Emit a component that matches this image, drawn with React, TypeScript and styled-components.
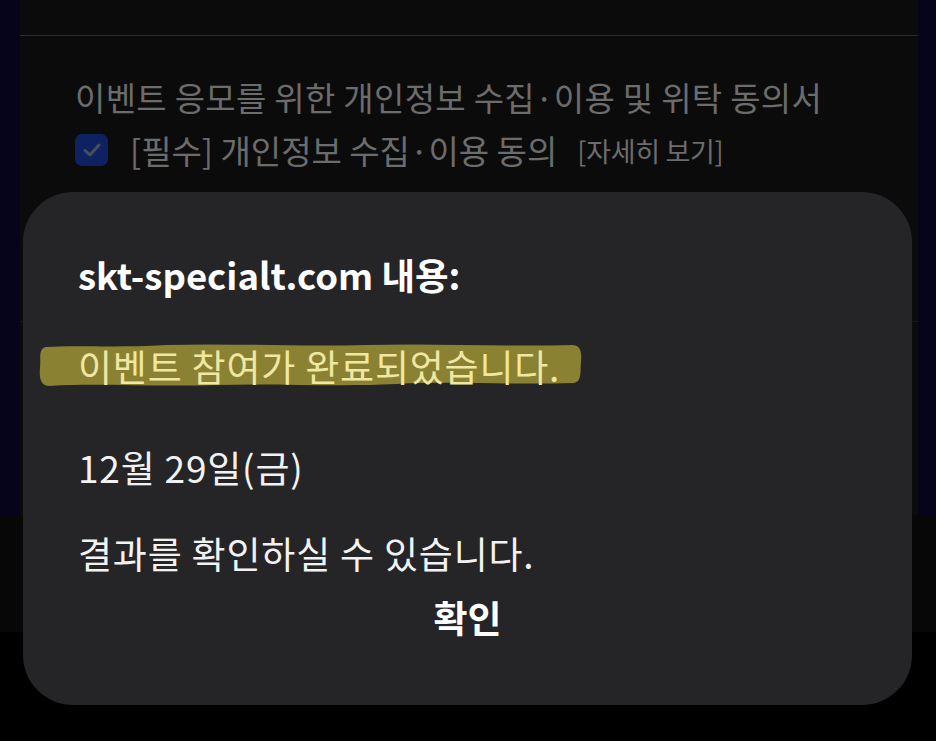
import React from "react";
import styled, { createGlobalStyle } from "styled-components";

const Global = createGlobalStyle`
  html, body { margin: 0; padding: 0; background: #000; }
  body { font-family: "Noto Sans CJK KR", "Noto Sans", sans-serif; }
`;

const Screen = styled.div`
  position: relative;
  width: 936px;
  height: 741px;
  overflow: hidden;
  background: #000;
`;

const TopArea = styled.div`
  display: flex;
  height: 515px;
  background: #05041a;
  padding: 0 18px 0 20px;
`;

const Page = styled.div`
  flex: 1;
  background: #0b0b0b;
  display: flex;
  flex-direction: column;
`;

const Divider = styled.div<{ $mt: number; $color: string }>`
  height: 1px;
  margin-top: ${(p) => p.$mt}px;
  background: ${(p) => p.$color};
`;

const Heading = styled.div`
  margin: 40px 0 0 55px;
  font-size: 33px;
  line-height: 42px;
  color: #6c6c6c;
  letter-spacing: 0.3px;
  white-space: nowrap;
`;

const AgreeRow = styled.div<{ $mt: number }>`
  display: flex;
  align-items: center;
  margin: ${(p) => p.$mt}px 0 0 55px;
  height: 42px;
  color: #6c6c6c;
  white-space: nowrap;
`;

const Check = styled.div<{ $on: boolean }>`
  width: 33px;
  height: 32px;
  border-radius: 7px;
  background: ${(p) => (p.$on ? "#0e2160" : "transparent")};
  display: flex;
  align-items: center;
  justify-content: center;
  margin-right: 22px;
`;

const AgreeLabel = styled.span`
  font-size: 33px;
  letter-spacing: 0px;
`;

const More = styled.span`
  font-size: 27px;
  margin-left: 20px;
  letter-spacing: -0.3px;
`;

const LowerBand = styled.div`
  height: 117px;
  background: #070707;
`;

const Dialog = styled.div`
  position: absolute;
  left: 23px;
  top: 192px;
  width: 889px;
  height: 513px;
  border-radius: 50px;
  background: #252527;
  display: flex;
  flex-direction: column;
  padding: 0 0 0 55px;
  box-sizing: border-box;
  color: #f2f2f2;
`;

const Title = styled.div`
  margin-top: 63px;
  font-size: 36.5px;
  font-weight: 700;
  line-height: 40px;
  letter-spacing: 0px;
  color: #fff;
  white-space: nowrap;
`;

const Line = styled.div<{ $mt: number }>`
  margin-top: ${(p) => p.$mt}px;
  font-size: 37px;
  line-height: 40px;
  letter-spacing: 0.8px;
  white-space: nowrap;
`;

const Marked = styled.div`
  position: relative;
  margin-top: 51px;
  height: 40px;
`;

const Marker = styled.svg`
  position: absolute;
  left: -42px;
  top: -5px;
`;

const MarkedText = styled.span`
  position: relative;
  font-size: 37px;
  line-height: 40px;
  letter-spacing: 0.8px;
  color: #efe7a2;
  white-space: nowrap;
`;

const Button = styled.div`
  margin: 24px 0 0 -55px;
  text-align: center;
  font-size: 37px;
  font-weight: 700;
  line-height: 40px;
  color: #fff;
`;

export default function App() {
  return (
    <Screen>
      <Global />
      <TopArea>
        <Page>
          <Divider $mt={35} $color="#2a2a2a" />
          <Heading>이벤트 응모를 위한 개인정보 수집·이용 및 위탁 동의서</Heading>
          <AgreeRow $mt={11}>
            <Check $on>
              <svg width="18" height="14" viewBox="0 0 18 14">
                <path d="M2 7.5 L7 12 L16 2" fill="none" stroke="#4a4e5c" strokeWidth="3" strokeLinecap="round" strokeLinejoin="round" />
              </svg>
            </Check>
            <AgreeLabel>[필수] 개인정보 수집·이용 동의</AgreeLabel>
            <More>[자세히 보기]</More>
          </AgreeRow>
          <AgreeRow $mt={18}>
            <Check $on={false} />
            <AgreeLabel>[선택] 개인정보 제3자 제공 동의</AgreeLabel>
          </AgreeRow>
          <Divider $mt={90} $color="#16161e" />
        </Page>
      </TopArea>
      <LowerBand />
      <Dialog>
        <Title>skt-specialt.com 내용:</Title>
        <Marked>
          <Marker width="548" height="48" viewBox="0 0 548 48">
            <path
              d="M10 6 C40 4 80 7 130 4 C200 2 260 6 330 4 C400 2 470 6 536 4 C544 4 546 10 545 20 C544 32 546 40 538 42 C470 44 420 40 360 43 C300 46 240 42 180 44 C120 46 60 42 14 45 C5 45 3 38 4 27 C5 16 2 8 10 6 Z"
              fill="#8a8132"
            />
          </Marker>
          <MarkedText>이벤트 참여가 완료되었습니다.</MarkedText>
        </Marked>
        <Line $mt={61}>12월 29일(금)</Line>
        <Line $mt={46}>결과를 확인하실 수 있습니다.</Line>
        <Button>확인</Button>
      </Dialog>
    </Screen>
  );
}
